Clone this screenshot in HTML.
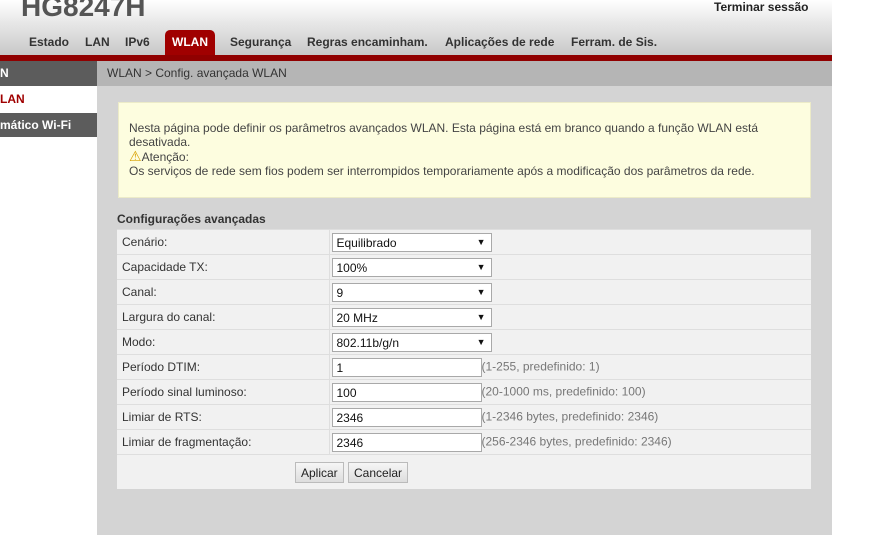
<!DOCTYPE html>
<html><head><meta charset="utf-8"><style>
*{margin:0;padding:0;box-sizing:border-box}
body{width:869px;height:535px;overflow:hidden;background:#fff;font-family:"Liberation Sans",Arial,sans-serif;font-size:12px;color:#333;position:relative}
.hdr{position:absolute;left:0;top:0;width:832px;height:55px;background:linear-gradient(#fff,#e8e8e8 40%,#c8c8c8)}
.logo{position:absolute;left:21px;top:-9px;font-size:28px;font-weight:bold;color:#555}
.term{position:absolute;left:714px;top:0;font-size:12px;font-weight:bold;color:#222}
.nav{position:absolute;top:35px;font-size:12px;font-weight:bold;color:#333}
.wl{position:absolute;left:165px;top:30px;width:50px;height:25px;background:#a00000;border-radius:5px 5px 0 0;color:#fff;font-weight:bold;text-align:center;line-height:24px}
.red{position:absolute;left:0;top:55px;width:832px;height:6px;background:#900000}
.main{position:absolute;left:97px;top:61px;width:735px;height:474px;background:#d4d4d4}
.bc{position:absolute;left:97px;top:61px;width:735px;height:25px;background:#b5b5b5;padding:5px 0 0 10px;color:#333}
.sd{position:absolute;left:0;width:97px;height:24px;background:#5c5c5c;color:#fff;font-weight:bold;padding:5px 0 0 0}
.note{position:absolute;left:118px;top:102px;width:693px;height:96px;background:#fdfddf;border:1px solid #ecebc8;padding:18px 10px;line-height:14px;color:#444}
.ttl{position:absolute;left:117px;top:212px;font-weight:bold;color:#333}
table{position:absolute;left:117px;top:229px;width:694px;border-collapse:collapse;background:#f1f1f1}
td{height:25px;border:1px solid #dedede;border-left:none;border-right:none;padding:0 5px;color:#333}
td.l{width:212px;border-right:1px solid #dedede}
td.v{padding:0 0 0 2px;color:#777}
.sel,.inp{display:inline-block;vertical-align:middle;width:160px;height:19px;border:1px solid #a9a9a9;background:#fff;color:#111;padding:2px 4px;position:relative}
.inp{width:150px}
.sel:after{content:"▼";position:absolute;right:5px;top:3px;font-size:9px}
.btns{position:absolute;left:117px;top:455px;width:694px;height:34px;background:#f1f1f1}
.b{position:absolute;top:7px;height:21px;border:1px solid #bbb;background:linear-gradient(#f6f6f6,#ddd);padding:3px 5px;color:#222}
</style></head><body>
<div class="hdr"></div>
<div class="logo">HG8247H</div>
<div class="term">Terminar sessão</div>
<div class="nav" style="left:29px">Estado</div>
<div class="nav" style="left:85px">LAN</div>
<div class="nav" style="left:125px">IPv6</div>
<div class="wl">WLAN</div>
<div class="nav" style="left:230px">Segurança</div>
<div class="nav" style="left:307px">Regras encaminham.</div>
<div class="nav" style="left:445px">Aplicações de rede</div>
<div class="nav" style="left:571px">Ferram. de Sis.</div>
<div class="red"></div>
<div class="main"></div>
<div class="bc">WLAN &gt; Config. avançada WLAN</div>
<div class="sd" style="top:61px;height:25px">N</div>
<div style="position:absolute;left:0;top:92px;color:#a00000;font-weight:bold">LAN</div>
<div class="sd" style="top:113px">mático Wi-Fi</div>
<div class="note">Nesta página pode definir os parâmetros avançados WLAN. Esta página está em branco quando a função WLAN está desativada.<br><span style="color:#d8a000;font-size:14px">⚠</span>Atenção:<br>Os serviços de rede sem fios podem ser interrompidos temporariamente após a modificação dos parâmetros da rede.</div>
<div class="ttl">Configurações avançadas</div>
<table>
<tr><td class="l">Cenário:</td><td class="v"><span class="sel">Equilibrado</span></td></tr>
<tr><td class="l">Capacidade TX:</td><td class="v"><span class="sel">100%</span></td></tr>
<tr><td class="l">Canal:</td><td class="v"><span class="sel">9</span></td></tr>
<tr><td class="l">Largura do canal:</td><td class="v"><span class="sel">20 MHz</span></td></tr>
<tr><td class="l">Modo:</td><td class="v"><span class="sel">802.11b/g/n</span></td></tr>
<tr><td class="l">Período DTIM:</td><td class="v"><span class="inp">1</span>(1-255, predefinido: 1)</td></tr>
<tr><td class="l">Período sinal luminoso:</td><td class="v"><span class="inp">100</span>(20-1000 ms, predefinido: 100)</td></tr>
<tr><td class="l">Limiar de RTS:</td><td class="v"><span class="inp">2346</span>(1-2346 bytes, predefinido: 2346)</td></tr>
<tr><td class="l">Limiar de fragmentação:</td><td class="v"><span class="inp">2346</span>(256-2346 bytes, predefinido: 2346)</td></tr>
</table>
<div class="btns"><span class="b" style="left:178px">Aplicar</span><span class="b" style="left:231px">Cancelar</span></div>
</body></html>
